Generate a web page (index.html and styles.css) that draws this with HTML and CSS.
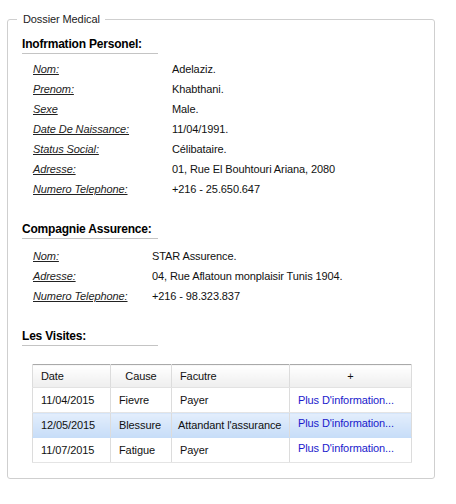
FILE: index.html
```html
<!DOCTYPE html>
<html>
<head>
<meta charset="utf-8">
<link rel="stylesheet" href="styles.css">
</head>
<body>
<fieldset class="dossier">
  <legend class="dossier-legend">Dossier Medical</legend>
  <div class="dossier-body">
    <h3 class="section-title first">Inofrmation Personel:</h3>
    <div class="info info-perso">
      <span class="lbl">Nom:</span><span class="val">Adelaziz.</span>
      <span class="lbl">Prenom:</span><span class="val">Khabthani.</span>
      <span class="lbl">Sexe</span><span class="val">Male.</span>
      <span class="lbl">Date De Naissance:</span><span class="val">11/04/1991.</span>
      <span class="lbl">Status Social:</span><span class="val">Célibataire.</span>
      <span class="lbl">Adresse:</span><span class="val">01, Rue El Bouhtouri Ariana, 2080</span>
      <span class="lbl">Numero Telephone:</span><span class="val">+216 - 25.650.647</span>
    </div>

    <h3 class="section-title">Compagnie Assurence:</h3>
    <div class="info info-assur">
      <span class="lbl">Nom:</span><span class="val">STAR Assurence.</span>
      <span class="lbl">Adresse:</span><span class="val">04, Rue Aflatoun monplaisir Tunis 1904.</span>
      <span class="lbl">Numero Telephone:</span><span class="val">+216 - 98.323.837</span>
    </div>

    <h3 class="section-title">Les Visites:</h3>
    <table class="visites">
      <colgroup>
        <col class="c1"><col class="c2"><col class="c3"><col class="c4">
      </colgroup>
      <thead>
        <tr>
          <th class="left">Date</th>
          <th>Cause</th>
          <th class="left">Facutre</th>
          <th>+</th>
        </tr>
      </thead>
      <tbody>
        <tr>
          <td>11/04/2015</td><td>Fievre</td><td>Payer</td><td><a class="more" href="#">Plus D'information...</a></td>
        </tr>
        <tr class="selected">
          <td>12/05/2015</td><td>Blessure</td><td class="tight">Attandant l'assurance</td><td class="up"><a class="more" href="#">Plus D'information...</a></td>
        </tr>
        <tr>
          <td>11/07/2015</td><td>Fatigue</td><td>Payer</td><td class="up"><a class="more" href="#">Plus D'information...</a></td>
        </tr>
      </tbody>
    </table>
  </div>
</fieldset>
</body>
</html>
```

FILE: styles.css
```css
html, body {
  margin: 0;
  padding: 0;
  background: #ffffff;
}

body {
  font-family: "Liberation Sans", Arial, sans-serif;
  font-size: 11px;
  color: #111;
  padding-top: 13px;
  letter-spacing: -0.1px;
}

.dossier {
  margin: 0 21px 0 7px;
  padding: 0;
  border: 1px solid #cfcfcf;
  border-radius: 3px;
  min-width: 0;
}

.dossier-legend {
  margin-left: 9px;
  padding: 0 5px 0 6px;
  font-size: 11px;
  line-height: 13px;
  color: #222;
}

.dossier-body {
  padding: 11px 14px 15px 14px;
}

.section-title {
  margin: 23px 0 0 0;
  width: 136px;
  padding-bottom: 2px;
  border-bottom: 1px solid #c4c4c4;
  font-size: 12px;
  line-height: 14px;
  font-weight: bold;
  color: #000;
  white-space: nowrap;
  letter-spacing: -0.2px;
}

.section-title.first {
  margin-top: 0;
}

.info {
  display: grid;
  grid-auto-rows: 20px;
  align-items: center;
  margin: 5px 0 0 11px;
}

.info-perso {
  grid-template-columns: 139px 1fr;
}

.info-assur {
  grid-template-columns: 119px 1fr;
  margin-top: 7px;
}

.lbl {
  font-style: italic;
  text-decoration: underline;
  color: #222;
  white-space: nowrap;
}

.val {
  color: #111;
  white-space: nowrap;
}

.visites {
  margin: 18px 0 0 10px;
  border-collapse: collapse;
  border: 1px solid #a9a9a9;
  table-layout: fixed;
  width: 379px;
}

.c1 { width: 78px; }
.c2 { width: 61px; }
.c3 { width: 118px; }
.c4 { width: 122px; }

.visites th,
.visites td {
  border-left: 1px solid #dcdcdc;
  border-right: 1px solid #dcdcdc;
  font-size: 11px;
  color: #111;
  white-space: nowrap;
  overflow: hidden;
}

.visites th {
  height: 22px;
  padding: 0 8px;
  font-weight: normal;
  text-align: center;
  background: linear-gradient(#ffffff, #eeeeee);
  border-bottom: 1px solid #e2e2e2;
}

.visites th.left {
  text-align: left;
}

.visites td {
  height: 24px;
  padding: 0 8px;
  border-bottom: 1px solid #e4e4e4;
  background: #ffffff;
}

.visites td.tight {
  padding: 0 4px 0 6px;
}

.visites td.up {
  vertical-align: top;
  padding-top: 4px;
  height: 20px;
}

.visites tr.selected td {
  background: linear-gradient(#e3eefc, #c7ddf8);
  border-bottom-color: #c7ddf8;
}

.more {
  color: #1a1acc;
  text-decoration: none;
}
```
